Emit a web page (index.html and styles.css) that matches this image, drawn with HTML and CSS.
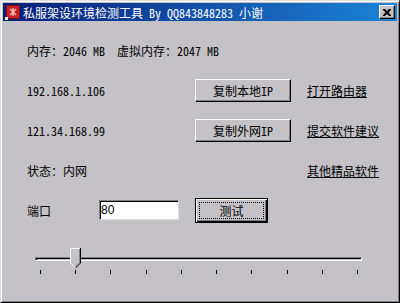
FILE: index.html
```html
<!DOCTYPE html>
<html lang="zh-CN">
<head>
  <meta charset="UTF-8">
  <title>私服架设环境检测工具</title>
  <link rel="stylesheet" href="styles.css">
</head>
<body>
  <div class="window">
    <div class="titlebar">
      <svg class="app-icon" width="16" height="16" viewBox="0 0 16 16">
        <rect x="1.5" y="1.5" width="13" height="13" fill="#c8202a" stroke="#7a1010"/>
        <path d="M5 5 L11 11 M11 5 L5 11 M8 4 V12" stroke="#f4b8a8" stroke-width="1.5"/>
        <rect x="0" y="13" width="3" height="3" fill="#f0f0f0"/>
      </svg>
      <span class="title">私服架设环境检测工具 By QQ843848283 小谢</span>
      <span class="close">
        <svg width="8" height="7" viewBox="0 0 8 7">
          <path d="M0 0h2l2 2 2-2h2v1l-2.5 2.5L8 6v1H6L4 5 2 7H0V6l2.5-2.5L0 1z" fill="#000"/>
        </svg>
      </span>
    </div>

    <div class="content">
      <div class="row">
        <span class="text">内存：2046 MB  虚拟内存：2047 MB</span>
      </div>
      <div class="row">
        <span class="label">192.168.1.106</span>
        <button class="btn">复制本地IP</button>
        <a class="link">打开路由器</a>
      </div>
      <div class="row">
        <span class="label">121.34.168.99</span>
        <button class="btn">复制外网IP</button>
        <a class="link">提交软件建议</a>
      </div>
      <div class="row">
        <span class="label">状态：内网</span>
        <span class="spacer"></span>
        <a class="link">其他精品软件</a>
      </div>
      <div class="row">
        <span class="label label-short">端口</span>
        <input class="port" type="text" value="80">
        <button class="btn btn-default"><span class="focus">测试</span></button>
      </div>

      <div class="slider">
        <div class="track"></div>
        <svg class="thumb" width="11" height="21" viewBox="0 0 11 21">
          <path d="M0 0H11V15L5.5 20.5L0 15Z" fill="#c4c2c6"/>
          <path d="M0.5 15V0.5H10" stroke="#fff" fill="none"/>
          <path d="M10.5 0V15L5.5 20" stroke="#000" fill="none"/>
          <path d="M9.5 1V14.6L5.5 18.6" stroke="#808080" fill="none"/>
          <path d="M0.5 15L5 19.5" stroke="#fff" fill="none"/>
        </svg>
        <div class="ticks">
          <i></i><i></i><i></i><i></i><i></i><i></i><i></i><i></i><i></i><i></i>
        </div>
      </div>
    </div>
  </div>
</body>
</html>
```

FILE: styles.css
```css
body {
  margin: 0;
  font-family: "Noto Sans Mono CJK SC", "Liberation Mono", "Noto Sans CJK SC", monospace;
  font-size: 12px;
  color: #000;
}
.window {
  width: 400px;
  height: 303px;
  box-sizing: border-box;
  background: #c4c2c6;
  border-style: solid;
  border-width: 1px;
  border-color: #dfdfdf #000 #000 #dfdfdf;
  box-shadow: inset 1px 1px #fff, inset -1px -1px #808080;
  padding: 2px;
}
.titlebar {
  height: 18px;
  display: flex;
  align-items: center;
  background: linear-gradient(to right, #0a1e78, #1a84d6);
  color: #fff;
  padding-left: 2px;
}
.app-icon {
  margin-right: 2px;
}
.title {
  flex: 1;
  white-space: pre;
}
.close {
  width: 16px;
  height: 14px;
  box-sizing: border-box;
  margin-right: 2px;
  background: #c4c2c6;
  display: flex;
  align-items: center;
  justify-content: center;
  border-style: solid;
  border-width: 1px;
  border-color: #fff #000 #000 #fff;
  box-shadow: inset -1px -1px #808080;
}
.content {
  padding: 17px 0 0 24px;
  display: flex;
  flex-direction: column;
  gap: 16px;
}
.row {
  height: 24px;
  display: flex;
  align-items: center;
}
.row:first-child {
  margin-top: 0;
}
.text {
  white-space: pre;
}
.label {
  width: 168px;
  flex: none;
}
.label-short {
  width: 72px;
}
.spacer {
  width: 112px;
  flex: none;
}
.btn {
  width: 96px;
  height: 23px;
  margin-right: 16px;
  padding: 0;
  font: inherit;
  color: #000;
  background: #c4c2c6;
  border-style: solid;
  border-width: 1px;
  border-color: #fff #000 #000 #fff;
  box-shadow: inset -1px -1px #808080;
}
.btn-default {
  width: 73px;
  height: 25px;
  margin-left: 16px;
  border: 1px solid #000;
  box-shadow: inset 1px 1px #fff, inset -1px -1px #000, inset -2px -2px #808080;
  padding: 3px;
  display: flex;
}
.focus {
  flex: 1;
  display: flex;
  align-items: center;
  justify-content: center;
  border: 1px dotted #000;
}
.link {
  text-decoration: underline;
  cursor: pointer;
}
.port {
  width: 80px;
  height: 20px;
  box-sizing: border-box;
  margin: 0;
  padding: 0 0 0 1px;
  font-family: "Liberation Sans", sans-serif;
  font-size: 12px;
  background: #fff;
  border-style: solid;
  border-width: 1px;
  border-color: #808080 #dfdfdf #dfdfdf #808080;
  box-shadow: inset 1px 1px #000;
  outline: none;
}
.slider {
  position: relative;
  height: 34px;
  margin-top: 10px;
}
.track {
  margin: 9px 0 0 8px;
  width: 327px;
  height: 4px;
  box-sizing: border-box;
  border-style: solid;
  border-width: 1px;
  border-color: #808080 #fff #fff #808080;
  box-shadow: inset 1px 1px #000;
}
.thumb {
  position: absolute;
  left: 43px;
  top: 0;
}
.ticks {
  margin: 9px 0 0 13px;
  width: 318px;
  display: flex;
  justify-content: space-between;
}
.ticks i {
  width: 1px;
  height: 4px;
  background: #000;
}
```
